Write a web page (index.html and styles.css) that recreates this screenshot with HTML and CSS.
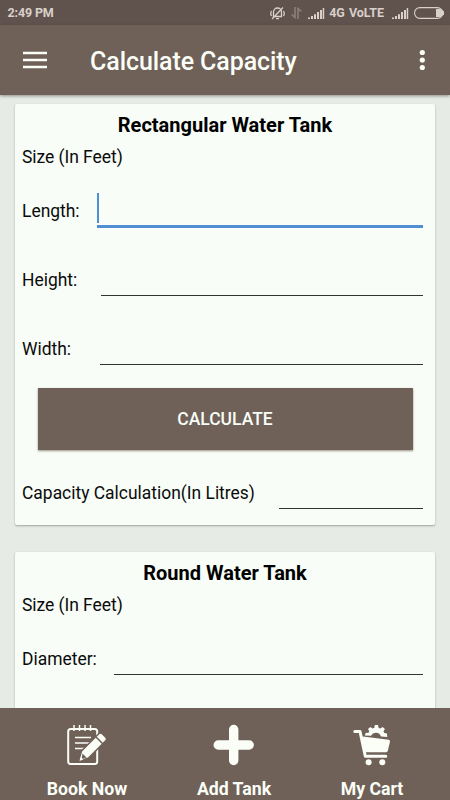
FILE: index.html
```html
<!DOCTYPE html>
<html lang="en">
<head>
<meta charset="utf-8">
<title>Calculate Capacity</title>
<link rel="stylesheet" href="styles.css">
</head>
<body>
<div class="screen">
  <div class="status">
    <span class="clock">2:49 PM</span>
    <svg class="status-muted" width="15" height="15" viewBox="0 0 15 15" fill="none" stroke="#d9d0ca" stroke-width="1.300"><path d="M3.500 10.500V6a4 4 0 0 1 8 0v4.500zM6 12.700h3M13 1.500L2 13M1.500 5Q0 7.500 1.500 10M13.500 5Q15 7.500 13.500 10"/></svg>
    <svg class="status-data" width="11" height="12" viewBox="0 0 11 12" fill="none" stroke="#8c827c" stroke-width="1.500"><path d="M4 0v10.500L.7 7.500M7 12V1.500l3.300 3"/></svg>
    <svg class="status-signal" width="17" height="11" viewBox="0 0 17 11" fill="#d9d0ca"><path d="M0 9.500h2V11H0zM3 8h2v3H3zM6 6.200h2V11H6zM9 4h2v7H9zM12 2h2v9h-2zM14.700 0H16.200v11H14.700z"/></svg>
    <span class="network">4G</span><span class="volte">VoLTE</span>
    <svg class="status-signal-two" width="17" height="11" viewBox="0 0 17 11" fill="#d9d0ca"><path d="M0 9.500h2V11H0zM3 8h2v3H3zM6 6.200h2V11H6zM9 4h2v7H9zM12 2h2v9h-2zM14.700 0H16.200v11H14.700z"/></svg>
    <svg class="status-battery" width="31" height="12" viewBox="0 0 31 12"><rect x=".6" y=".6" width="28" height="10.800" rx="5.200" fill="none" stroke="#d9d0ca" stroke-width="1.100"/><path d="M22 2h3.500a4 4 0 0 1 0 8H22z" fill="#d9d0ca"/><path d="M29.500 4v4" stroke="#d9d0ca"/></svg>
  </div>
  <header class="appbar">
    <svg class="menu" width="24" height="18" viewBox="0 0 24 18" fill="#fbfdf7"><path d="M0 .7h24v2.600H0zM0 7.700h24v2.600H0zM0 14.700h24v2.600H0z"/></svg>
    <h1 class="title">Calculate Capacity</h1>
    <svg class="more" width="6" height="22" viewBox="0 0 6 22" fill="#fbfdf7"><circle cx="3.300" cy="3.500" r="2.600"/><circle cx="3.300" cy="11" r="2.600"/><circle cx="3.300" cy="18.500" r="2.600"/></svg>
  </header>
  <main class="content">
    <section class="card">
      <h2 class="heading">Rectangular Water Tank</h2>
      <p class="size">Size (In Feet)</p>
      <div class="row row-length"><span class="label">Length:</span><span class="field focused"></span></div>
      <div class="row row-height"><span class="label">Height:</span><span class="field"></span></div>
      <div class="row row-width"><span class="label">Width:</span><span class="field"></span></div>
      <button class="calculate">CALCULATE</button>
      <div class="row row-capacity"><span class="label">Capacity Calculation(In Litres)</span><span class="field"></span></div>
    </section>
    <section class="card">
      <h2 class="heading">Round Water Tank</h2>
      <p class="size">Size (In Feet)</p>
      <div class="row row-diameter"><span class="label">Diameter:</span><span class="field"></span></div>
    </section>
  </main>
  <nav class="tabs">
    <div class="tab tab-book">
      <svg width="42" height="42" viewBox="0 0 42 42"><rect x="2.200" y="5" width="29" height="35" rx="2.500" fill="none" stroke="#fbfdf7" stroke-width="2"/><path d="M8 1v6M13.500 1v6M19 1v6M24.500 1v6" stroke="#fbfdf7" stroke-width="1.500"/><path d="M9 13.500h16M9 19h16M9 24.500h10" stroke="#fbfdf7" stroke-width="1.500"/><path d="M12.500 37.500L15.500 27 33 9.500q1.500-1.200 3 0l4 4q1 1.500 0 3L22.500 34z" fill="#fbfdf7" stroke="#6f6158" stroke-width="1.500"/><path d="M30 13l7 7" stroke="#6f6158" stroke-width="1.600"/><path d="M16.500 29.500l4 4-5 1.700z" fill="#6f6158"/><path d="M13.500 37l1.300-4 2.500 2.500z" fill="#fbfdf7"/></svg>
      <span>Book Now</span>
    </div>
    <div class="tab tab-add">
      <svg width="42" height="42" viewBox="0 0 42 42"><path d="M20.700 5.500v31M5.200 21h31" stroke="#fbfdf7" stroke-width="9.400" stroke-linecap="round"/></svg>
      <span>Add Tank</span>
    </div>
    <div class="tab tab-cart">
      <svg width="42" height="42" viewBox="0 0 42 42"><g transform="translate(-.7 -.3)"><path d="M4.500 7.700h5.200L15 32.500h20.500" fill="none" stroke="#fbfdf7" stroke-width="3" stroke-linecap="round" stroke-linejoin="round"/><path d="M10.500 12.500L38.500 16q1.500.3 1.200 2L37.500 27q-.5 1.500-2 1.500H14z" fill="#fbfdf7"/><circle cx="18.300" cy="38.500" r="3" fill="#fbfdf7"/><circle cx="32" cy="38.500" r="3" fill="#fbfdf7"/><path d="M14.500 11.800l1-2.800 2.500.2 1-1.700-1.300-2.200 2.500-2.100 2 1.500 1.900-.7.400-2.700h3.200l.5 2.700 1.900.7 2.200-1.500 2.300 2.200-1.400 2.200.8 1.800 2.600.4.400 3.500-6.300-.5a5.500 5.500 0 0 0-10-.8z" fill="#fbfdf7"/></g></svg>
      <span>My Cart</span>
    </div>
  </nav>
</div>
</body>
</html>
```
FILE: styles.css
```css
* { box-sizing: border-box; }
body { margin: 0; font-family: Roboto, "Liberation Sans", sans-serif; }
svg { display: block; flex: none; }
.screen { width: 450px; height: 800px; display: flex; flex-direction: column; overflow: hidden; background: #e6ebe5; }
.status { flex: none; height: 25px; display: flex; align-items: center; padding: 1px 5px 0 7.500px; background: #60534e; color: #d9d0ca; font-size: 12.500px; font-weight: 700; line-height: 24px; white-space: nowrap; }
.clock { flex: 1; letter-spacing: -.15px; }
.status-data { margin-left: 6px; }
.status-signal { margin-left: 6px; margin-top: 1px; }
.network { margin-left: 4px; }
.volte { margin-left: 4px; }
.status-signal-two { margin-left: 8px; margin-top: 1px; }
.status-battery { margin-left: 5px; }
.appbar { flex: none; height: 70px; display: flex; align-items: center; padding: 0 25px 0 23px; background: #6f6158; box-shadow: 0 1px 3px rgba(60, 50, 45, .5); z-index: 1; }
.title { flex: 1; margin: 3px 0 0 43px; color: #fbfdf7; font-size: 25px; letter-spacing: -.08px; font-weight: 500; line-height: 30px; white-space: nowrap; }
.content { flex: 1; min-height: 0; overflow: hidden; padding: 9px 15px 0; display: flex; flex-direction: column; gap: 27px; }
.card { flex: none; background: #f8fdf7; border-radius: 2px; box-shadow: 0 1px 2px rgba(70, 80, 70, .45); color: #0b0b0b; height: 421px; padding: 9px 12px 0 7px; }
.heading { margin: 0; height: 24px; line-height: 24px; font-size: 20px; font-weight: 700; text-align: center; padding-left: 5px; color: #000; }
.size { margin: 8px 0 7px; height: 24px; line-height: 24px; font-size: 17.500px; letter-spacing: -.05px; }
.row { display: flex; align-items: center; height: 69px; font-size: 17.450px; white-space: nowrap; }
.label { flex: none; }
.field { flex: 1; height: 32px; border-bottom: 1px solid #333; }
.row-length .label { width: 75px; }
.row-height .label { width: 79px; }
.row-width .label { width: 78px; }
.row-capacity .label { width: 257px; }
.row-diameter .label { width: 92px; }
.field.focused { height: 35px; border-bottom: 3px solid #508fd3; background: linear-gradient(#508fd3, #508fd3) 0 0 / 2px 30px no-repeat; }
.calculate { display: block; width: 375px; height: 62px; margin: 5px 0 8px 15.500px; padding-top: 1px; border: 0; background: #6f6158; box-shadow: 0 1px 2px rgba(90, 70, 60, .6); color: #f8fdf7; font: 500 17.500px Roboto, sans-serif; }
.tabs { flex: none; height: 92px; display: flex; background: #6f6158; color: #fbfdf7; font-size: 17.700px; font-weight: 700; }
.tab { flex: none; display: flex; flex-direction: column; align-items: center; padding-top: 16px; line-height: 24px; white-space: nowrap; }
.tab span { margin-top: 11px; }
.tab-book { width: 174px; }
.tab-add { width: 120px; }
.tab-cart { width: 156px; }
```
